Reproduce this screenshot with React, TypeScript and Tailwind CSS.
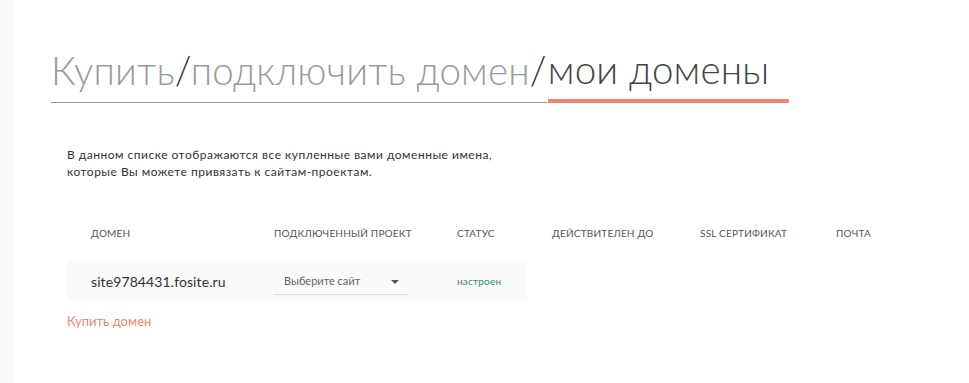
import React from "react";

const columns = [
  { label: "Домен", w: "w-[183px]" },
  { label: "Подключенный проект", w: "w-[183px]" },
  { label: "Статус", w: "w-[95px]" },
  { label: "Действителен до", w: "w-[148px]" },
  { label: "SSL сертификат", w: "w-[136px]" },
  { label: "Почта", w: "w-[80px]" },
];

const App = () => {
  return (
    <div className="flex min-h-[383px] w-[969px] bg-white font-['Lato',sans-serif] text-[#333]">
      {/* sidebar strip */}
      <div className="w-[14px] shrink-0 bg-[#fafafa]" />

      <div className="flex-1 pl-[37px] pt-[43px]">
        {/* Tabs heading */}
        <div className="flex items-end text-[38.5px] font-light leading-[52px] tracking-[0.2px]">
          <div className="border-b border-[#999] pb-[6px]">
            <span className="text-[#9b9b9b]">Купить</span>
            <span className="text-[#333]">/</span>
            <span className="text-[#9b9b9b]">подключить домен</span>
            <span className="text-[#333]">/</span>
          </div>
          <div className="ml-[1px] border-b-4 border-[#ea8672] pb-[4px] pr-[20px] text-[#444]">
            мои домены
          </div>
        </div>

        {/* Description */}
        <div className="mt-[43px] pl-[16px] text-[12px] leading-[17px] tracking-[0.5px] text-[#333]">
          <p>В данном списке отображаются все купленные вами доменные имена,</p>
          <p>которые Вы можете привязать к сайтам-проектам.</p>
        </div>

        {/* Table */}
        <div className="mt-[46px] pl-[16px]">
          <div className="flex pl-[24px] text-[10px] uppercase tracking-[0.2px] text-[#555]">
            {columns.map((c) => (
              <div key={c.label} className={c.w}>
                {c.label}
              </div>
            ))}
          </div>

          <div className="mt-[20px] flex h-[40px] w-[460px] items-center bg-[#fafafa] pl-[24px]">
            <div className="w-[183px] text-[14px] tracking-[0.1px] text-[#333]">site9784431.fosite.ru</div>
            <div className="w-[183px]">
              <div className="flex w-[135px] items-center justify-between border-b border-[#ddd] pb-[4px] pl-[10px] pr-[10px] pt-[6px] text-[11px] text-[#666]">
                <span>Выберите сайт</span>
                <svg width="8" height="4" viewBox="0 0 8 4">
                  <path d="M0 0h8L4 4z" fill="#555" />
                </svg>
              </div>
            </div>
            <div className="text-[10px] tracking-[0.2px] text-[#2d8a63]">настроен</div>
          </div>

          <a className="mt-[11px] block text-[13px] text-[#ea8672]">Купить домен</a>
        </div>
      </div>
    </div>
  );
};

export default App;
